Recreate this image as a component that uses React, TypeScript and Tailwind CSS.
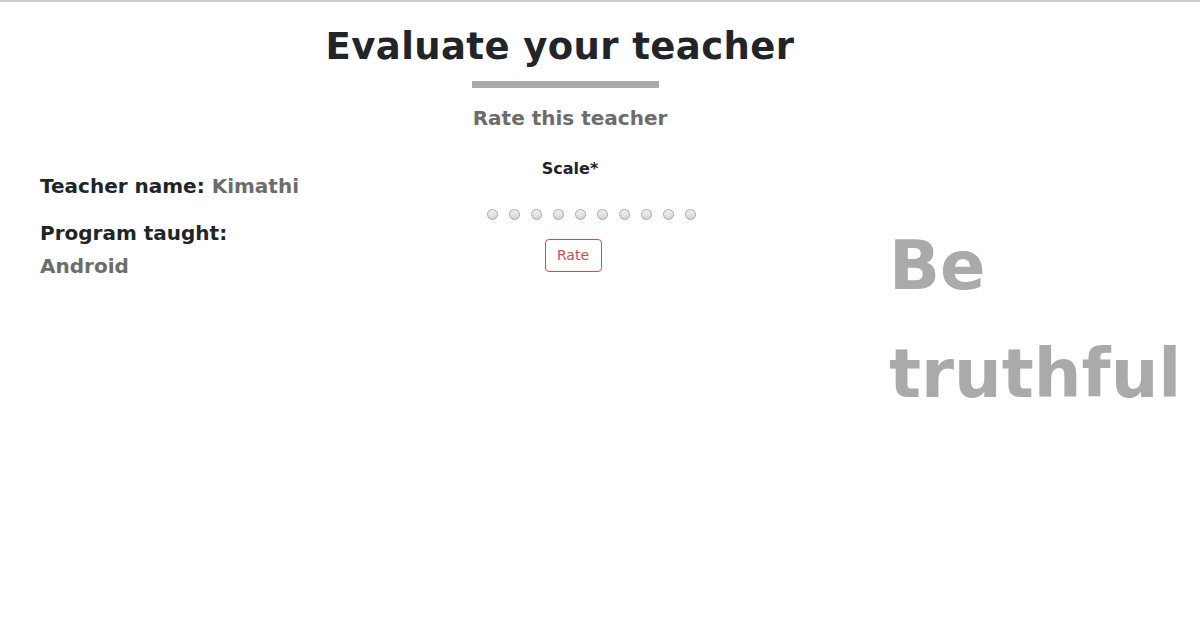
import React from 'react';

const font = { fontFamily: '"DejaVu Sans", "Open Sans", sans-serif' };

export default function App() {
  const points = Array.from({ length: 10 }, (_, i) => i + 1);

  return (
    <div className="min-h-[634px] bg-white border-t-2 border-[#cccccc] text-[#212529]" style={font}>
      {/* Heading */}
      <div className="flex justify-center pr-[80px] pt-[20px]">
        <h1 className="text-[37px] leading-[50px] font-bold tracking-[0.4px]">Evaluate your teacher</h1>
      </div>

      <div className="grid grid-cols-[450px_240px_1fr]">
        {/* Teacher details */}
        <div className="pl-10 pt-[99px]">
          <p className="text-[20px] leading-[30px] font-semibold">
            Teacher name: <span className="text-[#6c6c6c]">Kimathi</span>
          </p>
          <p className="mt-[17px] text-[20px] leading-[30px] font-semibold">Program taught:</p>
          <p className="mt-[3px] text-[20px] leading-[30px] font-semibold text-[#6c6c6c]">Android</p>
        </div>

        {/* Rating form */}
        <div className="flex flex-col items-center">
          <div className="mt-[9px] mr-[10px] h-[7px] w-[187px] bg-[#aaaaaa]" />
          <h2 className="mt-[15px] text-[20px] leading-[30px] font-semibold text-[#6c6c6c]">Rate this teacher</h2>
          <label className="mt-[24px] text-[16px] leading-[24px] font-semibold">Scale*</label>
          <div className="mt-[28px] ml-[42px] flex gap-[11px]">
            {points.map((p) => (
              <span
                key={p}
                className="block h-[11px] w-[11px] rounded-full border border-[#a9a9a9] bg-gradient-to-b from-[#f2f2f2] to-[#d4d4d4]"
              />
            ))}
          </div>
          <button className="mt-[19px] ml-[6px] h-[33px] w-[57px] rounded-[4px] border border-[#c4505a] text-[14px] text-[#c4505a]">
            Rate
          </button>
        </div>

        {/* Motto */}
        <div className="pl-[199px] pt-[140px]">
          <p className="text-[67px] leading-[108px] font-bold text-[#aaaaaa]">
            Be
            <br />
            truthful
          </p>
        </div>
      </div>
    </div>
  );
}
